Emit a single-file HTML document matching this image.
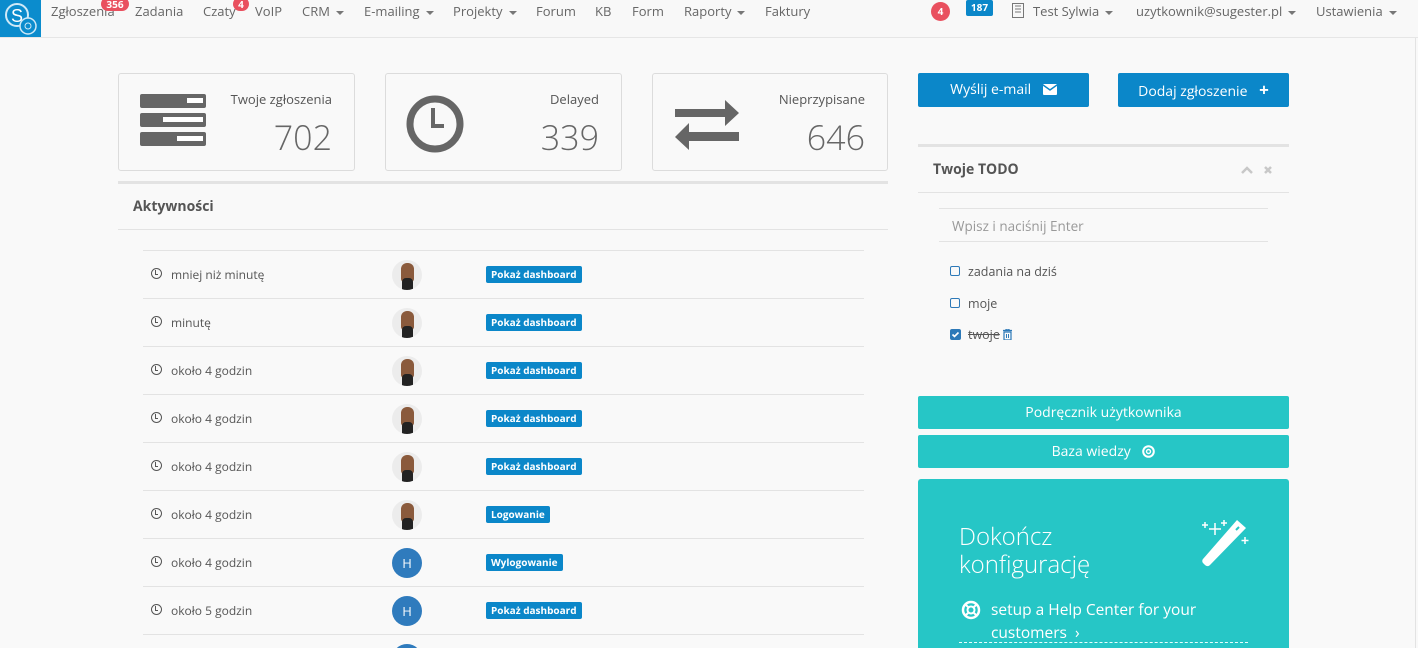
<!DOCTYPE html>
<html><head><meta charset="utf-8"><style>
*{box-sizing:border-box;margin:0;padding:0}
html,body{width:1418px;height:648px;overflow:hidden}
body{background:#f9f9f9;font-family:"Open Sans","Liberation Sans","DejaVu Sans",sans-serif;color:#555;position:relative}
.nav{position:absolute;left:0;top:0;width:1418px;height:38px;background:#f8f8f8;border-bottom:1px solid #e6e6e6}
.logo{position:absolute;left:0;top:0;width:41px;height:37px;background:#0b8ccd}
.ni{position:absolute;top:2px;font-size:13px;color:#666}
.car{display:inline-block;width:0;height:0;border-left:4px solid transparent;border-right:4px solid transparent;border-top:4px solid #777;vertical-align:middle;margin-left:6px}
.bdg{position:absolute;background:#e9505f;color:#fff;font-size:10px;font-weight:bold;border-radius:9px;text-align:center;line-height:14px;height:14px}
.box{position:absolute;top:73px;height:98px;border:1px solid #dcdcdc;border-radius:3px;background:#f9f9f9}
.box .l{position:absolute;right:22px;top:16px;font-size:13px;color:#555}
.box .n{position:absolute;right:22px;top:40px;font-size:34px;color:#666;font-weight:300}
.row{position:absolute;left:143px;width:721px;height:48px;border-top:1px solid #e3e3e3;overflow:hidden}
.row .t{position:absolute;left:28px;top:15px;font-size:12px;color:#555}
.row .c{position:absolute;left:8px;top:17px;width:11px;height:11px;border:1.6px solid #555;border-radius:50%}
.row .c:after{content:"";position:absolute;left:3px;top:1px;width:2px;height:4px;border-left:1.5px solid #555;border-bottom:1.5px solid #555}
.av{position:absolute;left:249px;top:9px;width:30px;height:30px;border-radius:50%;background:#ececec;overflow:hidden}
.av:before{content:"";position:absolute;left:9px;top:3px;width:13px;height:19px;border-radius:6px 6px 3px 3px;background:#8a5a3c}
.av:after{content:"";position:absolute;left:10px;top:18px;width:11px;height:13px;background:#222;border-radius:4px 4px 0 0}
.avh{position:absolute;left:249px;top:9px;width:30px;height:30px;border-radius:50%;background:#2f7bbd;color:#fff;font-size:13px;text-align:center;line-height:30px;font-style:normal}
.tag{position:absolute;left:343px;top:15px;background:#0b87c9;color:#fff;font-size:10px;font-weight:bold;padding:0 5px;height:17px;line-height:17px;border-radius:2px}
.btn{position:absolute;color:#fff;font-size:14px;text-align:center;border-radius:2px}
.cb{position:absolute;left:950px;width:10px;height:10px;border:1.5px solid #2d79b8;border-radius:2px}
.ti{position:absolute;left:968px;font-size:12.5px;color:#555}
</style></head><body>
<div class="nav">
<div class="logo"><svg width="41" height="37"><circle cx="17" cy="15" r="11" fill="none" stroke="#cfe9f7" stroke-width="2"/><text x="11" y="22" fill="#fff" font-size="18" font-family="Liberation Sans">S</text><circle cx="28" cy="26" r="8" fill="#0b8ccd" stroke="#cfe9f7" stroke-width="1.5"/><circle cx="28" cy="26" r="3" fill="none" stroke="#cfe9f7"/></svg></div>
<span class="ni" style="left:51px">Zgłoszenia</span><span class="bdg" style="left:101px;top:-3px;width:28px">356</span>
<span class="ni" style="left:135px">Zadania</span>
<span class="ni" style="left:203px">Czaty</span><span class="bdg" style="left:233px;top:-3px;width:16px">4</span>
<span class="ni" style="left:255px">VoIP</span>
<span class="ni" style="left:302px">CRM<i class="car"></i></span>
<span class="ni" style="left:364px">E-mailing<i class="car"></i></span>
<span class="ni" style="left:453px">Projekty<i class="car"></i></span>
<span class="ni" style="left:536px">Forum</span>
<span class="ni" style="left:595px">KB</span>
<span class="ni" style="left:632px">Form</span>
<span class="ni" style="left:684px">Raporty<i class="car"></i></span>
<span class="ni" style="left:765px">Faktury</span>
<span class="bdg" style="left:931px;top:2px;width:19px;height:19px;line-height:19px;border-radius:50%">4</span>
<span class="bdg" style="left:966px;top:0;width:27px;background:#0b87c9;border-radius:2px;height:16px;line-height:15px">187</span>
<svg style="position:absolute;left:1012px;top:3px" width="12" height="15"><rect x="0.5" y="0.5" width="11" height="14" fill="none" stroke="#777"/><path d="M3 3h6M3 6h6M3 9h6" stroke="#777"/></svg>
<span class="ni" style="left:1033px">Test Sylwia<i class="car"></i></span>
<span class="ni" style="left:1136px">uzytkownik@sugester.pl<i class="car"></i></span>
<span class="ni" style="left:1316px">Ustawienia<i class="car"></i></span>
</div>
<div style="position:absolute;left:1415px;top:38px;width:1px;height:610px;background:#e3e3e3"></div>

<div class="box" style="left:118px;width:237px"><svg style="position:absolute;left:21px;top:20px" width="66" height="52"><rect x="0" y="0" width="66" height="14" rx="2" fill="#666"/><rect x="0" y="19" width="66" height="14" rx="2" fill="#666"/><rect x="0" y="38" width="66" height="14" rx="2" fill="#666"/><rect x="47" y="4" width="16" height="5" fill="#fff"/><rect x="23" y="23" width="40" height="5" fill="#fff"/><rect x="37" y="42" width="26" height="5" fill="#fff"/></svg><span class="l">Twoje zgłoszenia</span><span class="n">702</span></div>
<div class="box" style="left:385px;width:237px"><svg style="position:absolute;left:20px;top:21px" width="58" height="58"><circle cx="29" cy="29" r="25" fill="none" stroke="#666" stroke-width="7"/><path d="M27 13v18h11" fill="none" stroke="#666" stroke-width="4"/></svg><span class="l">Delayed</span><span class="n">339</span></div>
<div class="box" style="left:652px;width:236px"><svg style="position:absolute;left:20px;top:26px" width="68" height="50"><path d="M2 9h50v-9l14 13-14 13v-9H2z" fill="#666"/><path d="M66 32H16v-9L2 37l14 13v-9h50z" fill="#666"/></svg><span class="l">Nieprzypisane</span><span class="n">646</span></div>

<div style="position:absolute;left:118px;top:181px;width:770px;height:3px;background:#e3e3e3"></div>
<div style="position:absolute;left:133px;top:197px;font-size:14px;font-weight:bold;color:#555">Aktywności</div>
<div style="position:absolute;left:118px;top:229px;width:770px;height:1px;background:#e3e3e3"></div>

<div class="row" style="top:250px"><i class="c"></i><span class="t">mniej niż minutę</span><i class="av"></i><span class="tag">Pokaż dashboard</span></div>
<div class="row" style="top:298px"><i class="c"></i><span class="t">minutę</span><i class="av"></i><span class="tag">Pokaż dashboard</span></div>
<div class="row" style="top:346px"><i class="c"></i><span class="t">około 4 godzin</span><i class="av"></i><span class="tag">Pokaż dashboard</span></div>
<div class="row" style="top:394px"><i class="c"></i><span class="t">około 4 godzin</span><i class="av"></i><span class="tag">Pokaż dashboard</span></div>
<div class="row" style="top:442px"><i class="c"></i><span class="t">około 4 godzin</span><i class="av"></i><span class="tag">Pokaż dashboard</span></div>
<div class="row" style="top:490px"><i class="c"></i><span class="t">około 4 godzin</span><i class="av"></i><span class="tag">Logowanie</span></div>
<div class="row" style="top:538px"><i class="c"></i><span class="t">około 4 godzin</span><span class="avh">H</span><span class="tag">Wylogowanie</span></div>
<div class="row" style="top:586px"><i class="c"></i><span class="t">około 5 godzin</span><span class="avh">H</span><span class="tag">Pokaż dashboard</span></div>
<div class="row" style="top:634px;height:14px"><span class="avh">H</span></div>

<div class="btn" style="left:918px;top:73px;width:171px;height:34px;line-height:34px;background:#0b87c9">Wyślij e-mail <svg width="14" height="11" style="margin-left:8px;vertical-align:-1px"><rect width="14" height="11" rx="1" fill="#fff"/><path d="M0 1l7 5 7-5" fill="none" stroke="#0b87c9" stroke-width="1.5"/></svg></div>
<div class="btn" style="left:1118px;top:73px;width:171px;height:34px;line-height:34px;background:#0b87c9">Dodaj zgłoszenie <b style="margin-left:8px;font-size:17px">+</b></div>

<div style="position:absolute;left:918px;top:144px;width:371px;height:3px;background:#e3e3e3"></div>
<div style="position:absolute;left:933px;top:160px;font-size:14px;font-weight:bold;color:#555">Twoje TODO</div>
<svg style="position:absolute;left:1241px;top:164px" width="34" height="12"><path d="M1 9l5-5 5 5" fill="none" stroke="#c8c8c8" stroke-width="2.5"/><path d="M24 3l6 6M30 3l-6 6" stroke="#c8c8c8" stroke-width="2.5"/></svg>
<div style="position:absolute;left:918px;top:192px;width:371px;height:1px;background:#e3e3e3"></div>
<div style="position:absolute;left:939px;top:208px;width:329px;height:34px;border-top:1px solid #e3e3e3;border-bottom:1px solid #e3e3e3;padding:8px 13px;font-size:13.5px;color:#999">Wpisz i naciśnij Enter</div>
<i class="cb" style="top:266px"></i><span class="ti" style="top:263px">zadania na dziś</span>
<i class="cb" style="top:298px"></i><span class="ti" style="top:295px">moje</span>
<svg style="position:absolute;left:950px;top:329px" width="11" height="11"><rect width="11" height="11" rx="2" fill="#2d79b8"/><path d="M2.5 5.5l2 2 4-4" fill="none" stroke="#fff" stroke-width="1.6"/></svg>
<span class="ti" style="top:326px;text-decoration:line-through">twoje</span>
<svg style="position:absolute;left:1003px;top:329px" width="9" height="11"><path d="M0 1.5h9M3 1.5V0h3v1.5M1 3h7v8H1z" fill="none" stroke="#2d79b8" stroke-width="1.2"/><path d="M3.5 5v4M5.5 5v4" stroke="#2d79b8"/></svg>

<div class="btn" style="left:918px;top:396px;width:371px;height:33px;line-height:33px;background:#26c6c6">Podręcznik użytkownika</div>
<div class="btn" style="left:918px;top:435px;width:371px;height:33px;line-height:33px;background:#26c6c6">Baza wiedzy <svg width="13" height="13" style="margin-left:8px;vertical-align:-2px"><circle cx="6.5" cy="6.5" r="5.3" fill="none" stroke="#fff" stroke-width="2"/><circle cx="6.5" cy="6.5" r="2" fill="none" stroke="#fff" stroke-width="1.4"/></svg></div>
<div style="position:absolute;left:918px;top:479px;width:371px;height:169px;background:#26c6c6;border-radius:3px 3px 0 0"></div>
<div style="position:absolute;left:959px;top:523px;font-size:24px;color:#fff;font-weight:300;line-height:28px">Dokończ<br>konfigurację</div>
<svg style="position:absolute;left:1200px;top:517px" width="50" height="52"><path d="M37 3l9 8-36 37c-2 2-4 1-5 0l-2-2c-1-1-1-3 0-4z" fill="#fff"/><path d="M39 10l-3 3" stroke="#26c6c6" stroke-width="2"/><path d="M5 5v6M2 8h6M15 6v12M9 12h12M24 3v6M21 6h6M45 20v7M41.5 23.5h7" stroke="#fff" stroke-width="1.5"/></svg>
<svg style="position:absolute;left:961px;top:600px" width="20" height="20"><circle cx="10" cy="10" r="8" fill="none" stroke="#fff" stroke-width="2.5"/><circle cx="10" cy="10" r="3.5" fill="none" stroke="#fff" stroke-width="2"/><path d="M4 4l3.5 3.5M16 4l-3.5 3.5M4 16l3.5-3.5M16 16l-3.5-3.5" stroke="#fff" stroke-width="2"/></svg>
<div style="position:absolute;left:991px;top:598px;font-size:15.5px;color:#fff;line-height:23px">setup a Help Center for your<br>customers &nbsp;›</div>
<div style="position:absolute;left:959px;top:642px;width:289px;border-top:1px dashed #e8ffff"></div>
</body></html>
